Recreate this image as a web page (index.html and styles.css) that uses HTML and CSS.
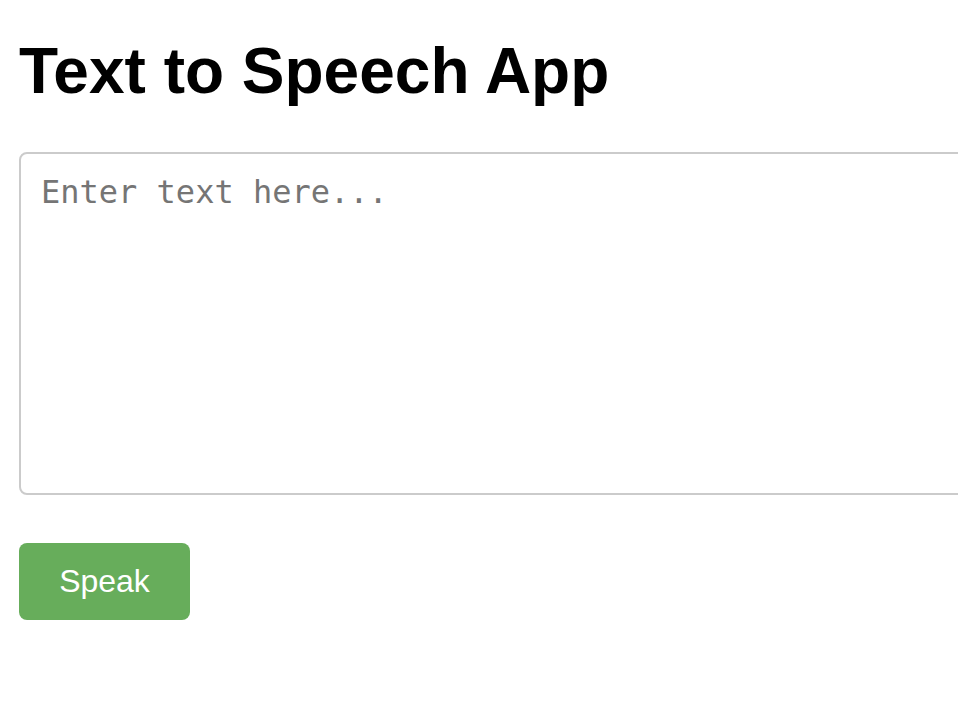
FILE: index.html
```html
<!DOCTYPE html>
<html lang="en">
<head>
<meta charset="utf-8">
<title>Text to Speech App</title>
<link rel="stylesheet" href="styles.css">
</head>
<body>
  <div class="app">
    <h1 class="title">Text to Speech App</h1>
    <textarea class="input" placeholder="Enter text here..."></textarea>
    <button class="speak" type="button">Speak</button>
  </div>
</body>
</html>
```
FILE: styles.css
```css
html, body {
  margin: 0;
  padding: 0;
  background: #fff;
  overflow: hidden;
}
.app {
  padding: 34px 0 0 19px;
  display: flex;
  flex-direction: column;
  align-items: flex-start;
}
.title {
  margin: 0;
  font-family: "Liberation Sans", Arial, sans-serif;
  font-weight: bold;
  font-size: 64px;
  line-height: 74px;
  color: #000;
}
.input {
  margin-top: 44px;
  box-sizing: border-box;
  width: 960px;
  height: 343px;
  padding: 19px 20px;
  border: 2px solid #cbcbcb;
  border-radius: 8px;
  font-family: "DejaVu Sans Mono", monospace;
  font-size: 32px;
  resize: none;
  outline: none;
  color: #000;
}
.input::placeholder {
  color: #757575;
}
.speak {
  margin-top: 48px;
  box-sizing: border-box;
  width: 171px;
  height: 77px;
  padding: 0;
  border: none;
  border-radius: 8px;
  background: #67ad5b;
  color: #fff;
  font-family: "Liberation Sans", Arial, sans-serif;
  font-size: 32px;
  cursor: pointer;
}
```
